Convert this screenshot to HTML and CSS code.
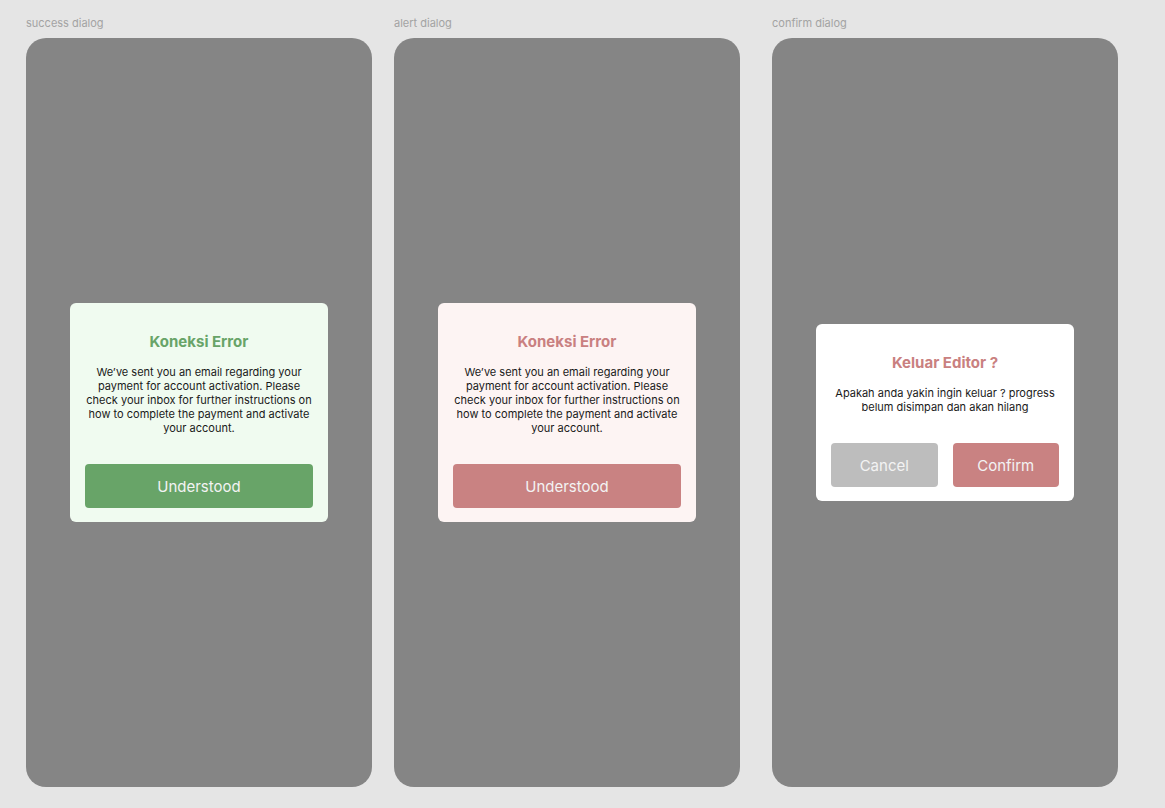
FILE: index.html
```html
<!DOCTYPE html>
<html lang="id">
<head>
    <meta charset="UTF-8">
    <meta name="viewport" content="width=device-width, initial-scale=1.0">
    <title>Dialogs</title>
    <link rel="stylesheet" href="styles.css">
</head>
<body>
    <div class="board">
        <!-- success -->
        <div class="column">
            <div class="frame-label">success dialog</div>
            <div class="frame">
                <div class="dialog dialog-success">
                    <h2 class="dialog-title">Koneksi Error</h2>
                    <p class="dialog-text">We’ve sent you an email regarding your payment for account activation. Please check your inbox for further instructions on how to complete the payment and activate your account.</p>
                    <div class="dialog-actions">
                        <button class="btn btn-success">Understood</button>
                    </div>
                </div>
            </div>
        </div>

        <!-- alert -->
        <div class="column">
            <div class="frame-label">alert dialog</div>
            <div class="frame">
                <div class="dialog dialog-alert">
                    <h2 class="dialog-title">Koneksi Error</h2>
                    <p class="dialog-text">We’ve sent you an email regarding your payment for account activation. Please check your inbox for further instructions on how to complete the payment and activate your account.</p>
                    <div class="dialog-actions">
                        <button class="btn btn-danger">Understood</button>
                    </div>
                </div>
            </div>
        </div>

        <!-- confirm -->
        <div class="column column-confirm">
            <div class="frame-label">confirm dialog</div>
            <div class="frame">
                <div class="dialog dialog-confirm">
                    <h2 class="dialog-title">Keluar Editor ?</h2>
                    <p class="dialog-text">Apakah anda yakin ingin keluar ? progress belum disimpan dan akan hilang</p>
                    <div class="dialog-actions">
                        <button class="btn btn-muted">Cancel</button>
                        <button class="btn btn-danger">Confirm</button>
                    </div>
                </div>
            </div>
        </div>
    </div>
</body>
</html>
```

FILE: styles.css
```css
body {
    margin: 0;
    background-color: #e5e5e5;
    font-family: 'Inter', 'Noto Sans', sans-serif;
}
.board {
    display: flex;
    gap: 22px;
    padding: 16px 0 0 26px;
}
.column-confirm {
    margin-left: 10px;
}
.frame-label {
    font-size: 11px;
    line-height: 14px;
    color: #a3a3a3;
    margin-bottom: 8px;
}
.frame {
    width: 346px;
    height: 749px;
    background-color: #858585;
    border-radius: 20px;
    display: flex;
    justify-content: center;
    align-items: center;
}
.dialog {
    width: 228px;
    padding: 30px 15px 14px;
    border-radius: 6px;
    text-align: center;
}
.dialog-success {
    background: #f0fbf0;
}
.dialog-alert {
    background: #fdf4f3;
}
.dialog-confirm {
    background: #fff;
}
.dialog-title {
    margin: 0 0 14px;
    font-size: 15px;
    line-height: 18px;
    font-weight: 700;
    color: #c98080;
}
.dialog-success .dialog-title {
    color: #68a468;
}
.dialog-text {
    margin: 0 0 29px;
    font-size: 11px;
    line-height: 14px;
    color: #1a1a1a;
}
.dialog-actions {
    display: flex;
    gap: 15px;
}
.btn {
    flex: 1;
    height: 44px;
    border: none;
    border-radius: 4px;
    font-family: inherit;
    font-size: 15px;
    color: #f3f3f3;
    cursor: pointer;
}
.btn-success {
    background-color: #68a468;
}
.btn-danger {
    background-color: #c98282;
}
.btn-muted {
    background-color: #bdbdbd;
}
```
